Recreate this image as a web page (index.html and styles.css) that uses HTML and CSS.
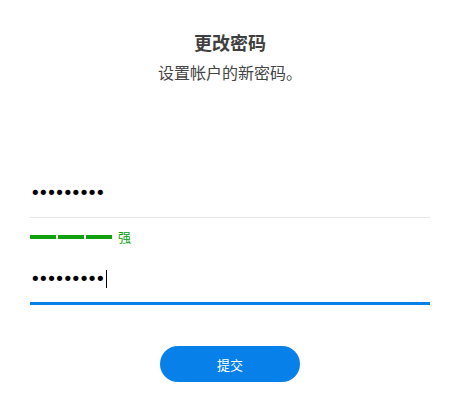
FILE: index.html
```html
<!DOCTYPE html>
<html lang="zh-CN">
<head>
<meta charset="utf-8">
<title>更改密码</title>
<link rel="stylesheet" href="styles.css">
</head>
<body>
<main class="page">
  <h1 class="title">更改密码</h1>
  <p class="subtitle">设置帐户的新密码。</p>
  <div class="field field-plain">
    <span class="dots">•••••••••</span>
  </div>
  <div class="strength">
    <span class="bar"></span><span class="bar"></span><span class="bar"></span>
    <span class="strength-label">强</span>
  </div>
  <div class="field field-active">
    <span class="dots">•••••••••</span><span class="caret"></span>
  </div>
  <div class="actions">
    <button class="submit" type="button">提交</button>
  </div>
</main>
</body>
</html>
```
FILE: styles.css
```css
* { box-sizing: border-box; }
html, body { margin: 0; padding: 0; background: #fff; }
body {
  font-family: "Noto Sans CJK SC", "Noto Sans", sans-serif;
  color: #3d3d3d;
}
.page {
  width: 400px;
  margin-left: 30px;
  padding-top: 30px;
}
.title {
  margin: 0;
  font-size: 18px;
  line-height: 24px;
  font-weight: 700;
  text-align: center;
  color: #3f3f3f;
}
.subtitle {
  margin: 7px 0 0;
  font-size: 16px;
  line-height: 22px;
  text-align: center;
  color: #444;
}
.field {
  display: flex;
  align-items: center;
  padding-left: 0;
}
.field-plain {
  margin-top: 85px;
  height: 50px;
  border-bottom: 1px solid #e8e8e8;
}
.field-active {
  margin-top: 9px;
  height: 49px;
  border-bottom: 3px solid #0780ea;
}
.dots {
  font-family: "DejaVu Sans", sans-serif;
  font-size: 18px;
  letter-spacing: -2.5px;
  color: #000;
  line-height: 18px;
}
.caret {
  display: inline-block;
  width: 1px;
  height: 18px;
  background: #000;
  margin-left: 3px;
}
.strength {
  display: flex;
  align-items: center;
  gap: 2px;
  margin-top: 9px;
  height: 20px;
}
.bar {
  width: 26px;
  height: 4px;
  background: #10a010;
}
.strength-label {
  margin-left: 4px;
  font-size: 13px;
  line-height: 20px;
  color: #10a010;
}
.actions {
  display: flex;
  justify-content: center;
  margin-top: 41px;
}
.submit {
  width: 140px;
  height: 36px;
  border: 0;
  border-radius: 18px;
  background: #0780ea;
  color: #fff;
  font-family: "Noto Sans CJK SC", sans-serif;
  font-size: 13px;
  padding: 0;
}
```
